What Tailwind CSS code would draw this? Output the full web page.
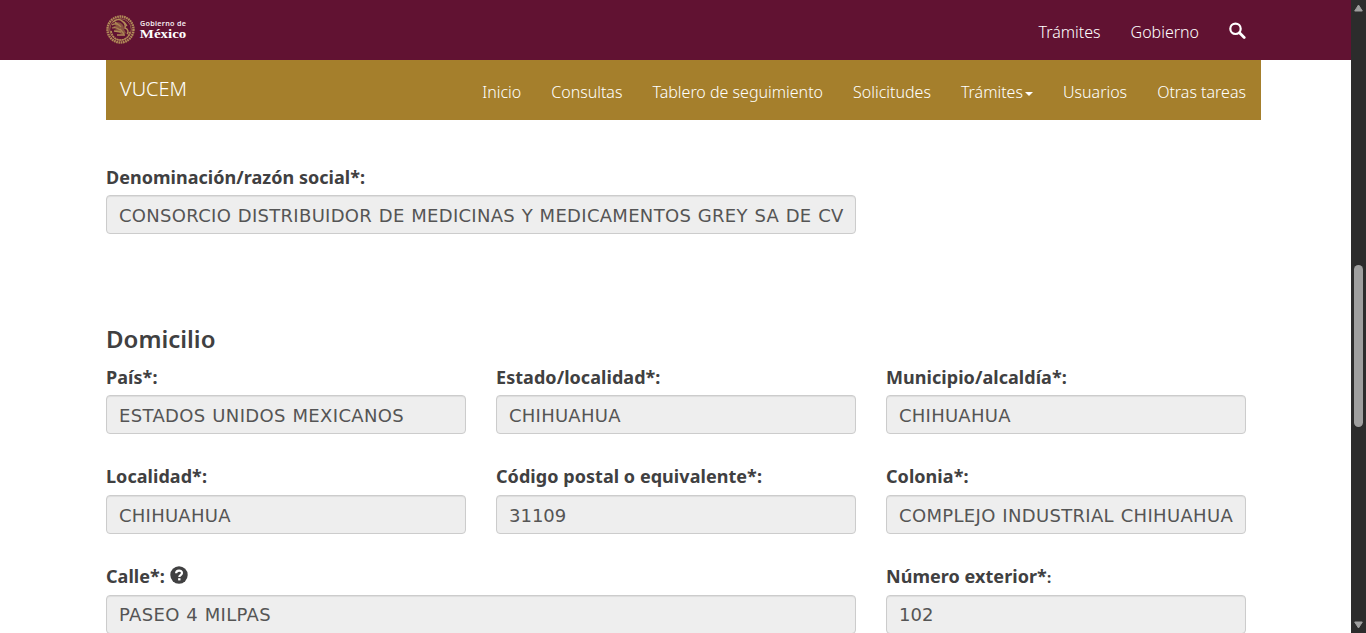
<!DOCTYPE html>
<html lang="es">
<head>
<meta charset="utf-8">
<title>VUCEM</title>
<script src="https://cdn.jsdelivr.net/npm/@tailwindcss/browser@4"></script>
</head>
<body class="flex h-screen overflow-hidden bg-white font-['Noto_Sans',sans-serif] text-[#404041]">
<div class="flex h-full w-[1351px] shrink-0 flex-col overflow-hidden">
  <header class="flex h-[60px] shrink-0 items-center justify-between bg-[#611232] pr-[105px] pl-[106px] text-white">
    <svg class="h-[60px] w-[84px]" viewBox="106 0 84 60" aria-label="Gobierno de México">
      <g fill="none" stroke="#b18b58">
        <circle cx="120.5" cy="29.5" r="13" stroke-width="2.400" stroke-dasharray="1.7 .6"/>
        <circle cx="120.5" cy="29.5" r="10.8" stroke-width=".9" opacity=".75"/>
        <path d="M111 31c1 6 5 9 9.500 9s8.500-3 9.500-8" stroke-width="1.700" stroke-dasharray="2 .6"/>
        <path d="M113 22c3-3 7-3 9-1 2 1 4 4 3 7 3 1 4 4 2 6" stroke-width="1.500"/>
        <path d="M112 25c3-2 7-1 9 2M112 28c3-1 6 0 8 2M114 31l7 1M117 35h8M120 29l4 5M115 22l5 4M124 22l3 4" stroke-width="1.300"/>
      </g>
      <path d="M114 24c5-4 10 0 10 5l2 4-4 2-3-3-5-2 3-1-4-3 3 0z" fill="#a57f4c" opacity=".6"/>
      <text x="140" y="26" font-family="Noto Sans" font-size="7.200" font-weight="600" textLength="46" fill="#f5e9ee">Gobierno de</text>
      <text x="139.800" y="38" font-family="Liberation Serif" font-size="13.500" font-weight="700" textLength="46.500" lengthAdjust="spacingAndGlyphs" fill="#fff">México</text>
    </svg>
    <nav class="flex items-center gap-[30px] pt-1 text-base font-light">
      <a>Trámites</a><a>Gobierno</a>
      <svg class="-mt-1 h-[17px] w-[17px]" viewBox="0 0 17 17" fill="none" stroke="#fff"><circle cx="6.500" cy="6.800" r="5.200" stroke-width="2.200"/><path d="M10.500 10.800l4.700 4.700" stroke-width="2.800" stroke-linecap="round"/></svg>
    </nav>
  </header>
  <div class="ml-[106px] flex h-[60px] w-[1155px] shrink-0 justify-between bg-[#a57f2c] pr-[15px] pl-[14px] font-light text-white">
    <a class="pt-[14px] text-[20px] leading-[30px]">VUCEM</a>
    <nav class="flex gap-[30px] pt-5 text-base leading-6">
      <a>Inicio</a><a>Consultas</a><a>Tablero de seguimiento</a><a>Solicitudes</a>
      <a class="flex h-6 items-center">Trámites<svg class="mt-[3px] ml-[2px] h-1 w-2" viewBox="0 0 8 4"><path d="M0 0h8L4 4z" fill="#fff"/></svg></a>
      <a>Usuarios</a><a>Otras tareas</a>
    </nav>
  </div>
  <main class="ml-[106px] w-[1140px] pt-[44px] text-[18px]">
    <div class="mb-[90px] w-[750px]">
      <label class="mb-[5px] block h-[26px] leading-[26px] font-bold tracking-[0.030px]">Denominación/razón social*:</label>
      <div class="h-[39px] rounded border border-[#ccc] bg-[#eee] px-[12px] font-['DejaVu_Sans',sans-serif] leading-[40px] whitespace-nowrap text-[#555] shadow-[inset_0_1px_1px_rgba(0,0,0,0.075)] [word-spacing:0.6px]"><span class="tracking-[0.300px]">CONSORCIO DISTRIBUIDOR DE MEDICINAS Y MEDICAMENTOS GREY SA DE CV</span></div>
    </div>
    <h2 class="mb-[10px] h-[30px] text-[24px] leading-[30px] font-semibold">Domicilio</h2>
    <div class="grid grid-cols-3 gap-[30px]">
      <div><label class="mb-[5px] block h-[26px] leading-[26px] font-bold tracking-[0.050px]">País*:</label>
        <div class="h-[39px] rounded border border-[#ccc] bg-[#eee] px-[12px] font-['DejaVu_Sans',sans-serif] leading-[40px] whitespace-nowrap text-[#555] shadow-[inset_0_1px_1px_rgba(0,0,0,0.075)] [word-spacing:0.6px]"><span class="tracking-[0.350px]">ESTADOS UNIDOS MEXICANOS</span></div></div>
      <div><label class="mb-[5px] block h-[26px] leading-[26px] font-bold tracking-[0.050px]">Estado/localidad*:</label>
        <div class="h-[39px] rounded border border-[#ccc] bg-[#eee] px-[12px] font-['DejaVu_Sans',sans-serif] leading-[40px] whitespace-nowrap text-[#555] shadow-[inset_0_1px_1px_rgba(0,0,0,0.075)]"><span class="tracking-[0.250px]">CHIHUAHUA</span></div></div>
      <div><label class="mb-[5px] block h-[26px] leading-[26px] font-bold tracking-[0.050px]">Municipio/alcaldía*:</label>
        <div class="h-[39px] rounded border border-[#ccc] bg-[#eee] px-[12px] font-['DejaVu_Sans',sans-serif] leading-[40px] whitespace-nowrap text-[#555] shadow-[inset_0_1px_1px_rgba(0,0,0,0.075)]"><span class="tracking-[0.250px]">CHIHUAHUA</span></div></div>
      <div><label class="mb-[5px] block h-[26px] leading-[24px] font-bold tracking-[0.050px]">Localidad*:</label>
        <div class="h-[39px] rounded border border-[#ccc] bg-[#eee] px-[12px] font-['DejaVu_Sans',sans-serif] leading-[40px] whitespace-nowrap text-[#555] shadow-[inset_0_1px_1px_rgba(0,0,0,0.075)]"><span class="tracking-[0.250px]">CHIHUAHUA</span></div></div>
      <div><label class="mb-[5px] block h-[26px] leading-[24px] font-bold tracking-[0.050px]">Código postal o equivalente*:</label>
        <div class="h-[39px] rounded border border-[#ccc] bg-[#eee] px-[12px] font-['DejaVu_Sans',sans-serif] leading-[40px] whitespace-nowrap text-[#555] shadow-[inset_0_1px_1px_rgba(0,0,0,0.075)]">31109</div></div>
      <div><label class="mb-[5px] block h-[26px] leading-[24px] font-bold tracking-[0.050px]">Colonia*:</label>
        <div class="h-[39px] rounded border border-[#ccc] bg-[#eee] px-[12px] font-['DejaVu_Sans',sans-serif] leading-[40px] whitespace-nowrap text-[#555] shadow-[inset_0_1px_1px_rgba(0,0,0,0.075)] [word-spacing:0.6px]"><span class="tracking-[0.330px]">COMPLEJO INDUSTRIAL CHIHUAHUA</span></div></div>
      <div class="col-span-2"><label class="mb-[5px] flex h-[26px] gap-[5px] leading-[24px] font-bold tracking-[0.050px]">Calle*:
        <svg class="mt-[2px] h-[18px] w-[18px]" viewBox="0 0 18 18"><circle cx="9" cy="9" r="8.700" fill="#404041"/><path d="M6.100 7.300C6.100 3.700 12 3.700 12 7c0 2-2.700 2.100-2.700 4" fill="none" stroke="#fff" stroke-width="2.200"/><path d="M8.100 12.200h2.400v2.200H8.100z" fill="#fff"/></svg></label>
        <div class="h-[39px] rounded border border-[#ccc] bg-[#eee] px-[12px] font-['DejaVu_Sans',sans-serif] leading-[38px] whitespace-nowrap text-[#555] shadow-[inset_0_1px_1px_rgba(0,0,0,0.075)] [word-spacing:0.6px]"><span class="tracking-[0.330px]">PASEO 4 MILPAS</span></div></div>
      <div><label class="mb-[5px] block h-[26px] leading-[24px] font-bold tracking-[0.050px]">Número exterior*<span class="text-[15px]">:</span></label>
        <div class="h-[39px] rounded border border-[#ccc] bg-[#eee] px-[12px] font-['DejaVu_Sans',sans-serif] leading-[38px] whitespace-nowrap text-[#555] shadow-[inset_0_1px_1px_rgba(0,0,0,0.075)]">102</div></div>
    </div>
  </main>
</div>
<div class="flex h-[633px] w-[15px] shrink-0 flex-col items-center bg-[#2c2c2c] pt-1">
  <svg class="h-2 w-[9px] shrink-0" viewBox="0 0 9 8"><path d="M4.500 1L8.300 7H.7z" fill="#9f9f9f" stroke="#9f9f9f" stroke-linejoin="round"/></svg>
  <div class="mt-[253px] h-[162px] w-[9px] shrink-0 rounded-full bg-[#9f9f9f]"></div>
  <svg class="mt-[194px] h-2 w-[9px] shrink-0" viewBox="0 0 9 8"><path d="M4.500 7L8.300 1H.7z" fill="#9f9f9f" stroke="#9f9f9f" stroke-linejoin="round"/></svg>
</div>
</body>
</html>
